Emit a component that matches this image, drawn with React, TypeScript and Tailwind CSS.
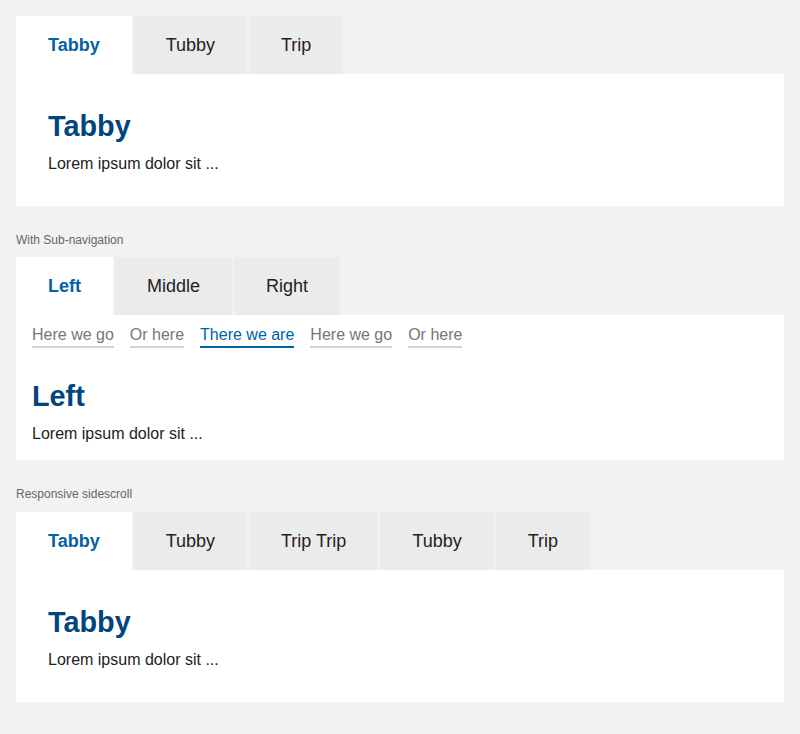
const SUB_LINKS = ["Here we go", "Or here", "There we are", "Here we go", "Or here"];

function TabBar({ tabs, active }: { tabs: string[]; active: number }) {
  return (
    <div className="flex gap-[2px]">
      {tabs.map((t, i) => (
        <button
          key={i}
          className={
            i === active
              ? "shrink-0 bg-white px-8 py-4 text-[18px] leading-[26px] font-bold text-[#0062a8]"
              : "shrink-0 bg-[#ebebeb] px-8 py-4 text-[18px] leading-[26px] text-[#222]"
          }
        >
          {t}
        </button>
      ))}
    </div>
  );
}

function Panel({ title }: { title: string }) {
  return (
    <div className="bg-white px-8 pt-[34px] pb-[30px]">
      <h2 className="mb-2 text-[28.8px] leading-9 font-bold text-[#00457f]">{title}</h2>
      <p className="text-base leading-6 text-[#222]">Lorem ipsum dolor sit ...</p>
    </div>
  );
}

function Label({ children, last }: { children: string; last?: boolean }) {
  return (
    <div className={last ? "mt-[26px] mb-[10px] text-xs leading-4 text-[#666]" : "mt-[26px] mb-[9px] text-xs leading-4 text-[#666]"}>
      {children}
    </div>
  );
}

export default function App() {
  return (
    <main className="min-h-screen bg-[#f2f2f2] px-4 pt-4 pb-8 font-['Liberation_Sans',Arial,sans-serif]">
      <TabBar tabs={["Tabby", "Tubby", "Trip"]} active={0} />
      <Panel title="Tabby" />

      <Label>With Sub-navigation</Label>
      <TabBar tabs={["Left", "Middle", "Right"]} active={0} />
      <div className="bg-white px-4 pt-[10px] pb-[14px]">
        <nav className="flex gap-4">
          {SUB_LINKS.map((l, i) => (
            <a
              key={i}
              className={
                i === 2
                  ? "border-b-2 border-[#0062a8] pb-px text-base leading-5 text-[#0062a8]"
                  : "border-b-2 border-[#d4d4d4] pb-px text-base leading-5 text-[#767676]"
              }
            >
              {l}
            </a>
          ))}
        </nav>
        <h2 className="mt-[30px] mb-2 text-[28.8px] leading-9 font-bold text-[#00457f]">Left</h2>
        <p className="text-base leading-6 text-[#222]">Lorem ipsum dolor sit ...</p>
      </div>

      <Label last>Responsive sidescroll</Label>
      <div className="overflow-x-auto">
        <TabBar tabs={["Tabby", "Tubby", "Trip Trip", "Tubby", "Trip"]} active={0} />
      </div>
      <Panel title="Tabby" />
    </main>
  );
}
